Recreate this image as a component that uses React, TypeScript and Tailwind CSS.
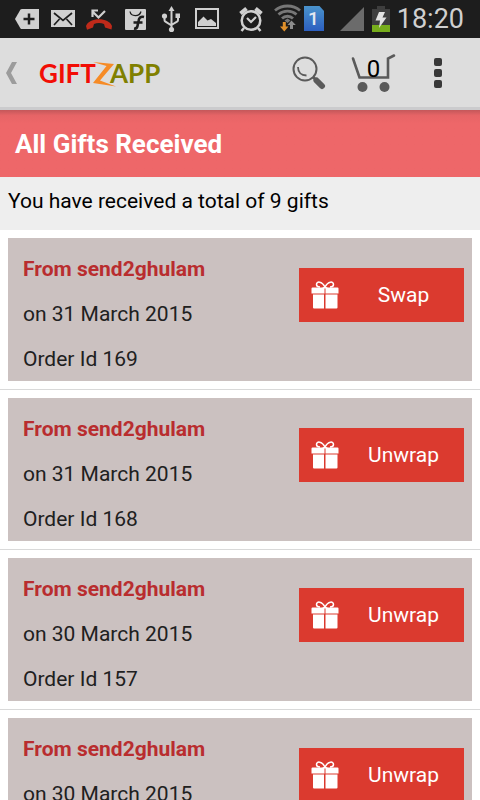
import type { ReactNode } from 'react'

interface Gift {
  id: number
  from: string
  date: string
  action: 'Swap' | 'Unwrap'
}

const totalGifts = 9

const gifts: Gift[] = [
  { id: 169, from: 'send2ghulam', date: '31 March 2015', action: 'Swap' },
  { id: 168, from: 'send2ghulam', date: '31 March 2015', action: 'Unwrap' },
  { id: 157, from: 'send2ghulam', date: '30 March 2015', action: 'Unwrap' },
  { id: 156, from: 'send2ghulam', date: '30 March 2015', action: 'Unwrap' },
]

function StatusIcon({ width = 36, children }: { width?: number; children: ReactNode }) {
  return (
    <svg width={width} height={38} viewBox={`0 0 ${width} 38`} fill="none" className="shrink-0" aria-hidden="true">
      {children}
    </svg>
  )
}

function StatusBar() {
  return (
    <div className="flex h-[38px] shrink-0 items-center justify-between bg-[#1d1d1d] pr-4 pl-[9px] text-[#d0d0d0]">
      <div className="flex">
        <StatusIcon>
          <path d="M6 19 11.500 9.500Q12 9 13 9H30V29H13Q12 29 11.500 28.500Z" fill="#d0d0d0" />
          <path d="M20 13.500V24.500M14.500 19H25.500" stroke="#1d1d1d" strokeWidth="2.500" />
        </StatusIcon>
        <StatusIcon>
          <path d="M6 10H30V27H6Z" fill="#d0d0d0" />
          <path d="M9 13 18 20.500 27 13M9 25 14.500 19M27 25 21.500 19" stroke="#1d1d1d" strokeWidth="1.700" />
        </StatusIcon>
        <StatusIcon>
          <path d="M24 11 17.500 17.500 11.500 11.500M11.500 17V10.500H17" stroke="#d0d0d0" strokeWidth="2.200" />
          <path d="M5 26C8 17 28 17 31 26L30.500 29.500 24 27.500 23 24C20 22.500 16 22.500 13 24L12 27.500 6 29.800Z" fill="#bf2a1a" />
        </StatusIcon>
        <StatusIcon>
          <rect x="8" y="9" width="21" height="21" rx="1" fill="#d0d0d0" />
          <path d="M13 11.500C14 17 22.500 17 24 11.500" stroke="#1d1d1d" strokeWidth="1.300" />
          <path d="M27 17C23.500 16 22 18 21.500 21L20.500 26Q20 29 17 28.500M16.500 22.500H25.500" stroke="#1d1d1d" strokeWidth="2.600" />
        </StatusIcon>
        <StatusIcon>
          <path d="M18.500 9V30M11.500 17V20Q11.500 21 12.500 21.700L18.500 25.500M25 17V20Q25 21 24 21.700L18.500 25" stroke="#d0d0d0" strokeWidth="2" />
          <path d="M18.500 6 21.500 11H15.500Z" fill="#d0d0d0" />
          <circle cx="11.500" cy="16" r="2.600" fill="#d0d0d0" />
          <path d="M22.500 13.500H27V18H22.500Z" fill="#d0d0d0" />
          <circle cx="18.500" cy="29.500" r="2.600" fill="#d0d0d0" />
        </StatusIcon>
        <StatusIcon>
          <rect x="7" y="9" width="22" height="19" stroke="#d0d0d0" strokeWidth="2" />
          <path d="M9 26V22L14.500 16.500 18.500 20.500 22 19 27 23V26Z" fill="#d0d0d0" />
        </StatusIcon>
      </div>

      <div className="flex items-center">
        <StatusIcon>
          <circle cx="18" cy="20.500" r="9.300" stroke="#d0d0d0" strokeWidth="2.500" />
          <path d="M14 18 18 22 23 17" stroke="#d0d0d0" strokeWidth="2.200" />
          <path d="M7.500 13.500 13.500 8.500M28.500 13.500 22.500 8.500" stroke="#d0d0d0" strokeWidth="4" />
          <path d="M11 28 8.500 31M25 28 27.500 31" stroke="#d0d0d0" strokeWidth="2.500" />
        </StatusIcon>
        <StatusIcon width={34}>
          <path d="M6 10.500C13 4.500 24 4.500 31 10.500M9.500 14.500C14.500 10 22.500 10 27.500 14.500M13 18.500C16 15.500 21 15.500 24 18.500" stroke="#777777" strokeWidth="2.800" />
          <path d="M15.500 20.500 18.500 18.500 21.500 20.500 18.500 23Z" fill="#777777" />
          <path d="M13.800 22H16.800V26.500H19.500L15.300 31.500 11 26.500H13.800Z" fill="#e0902a" />
          <path d="M21 29V25H18.500L22.500 20.500 26.800 25H24V29Z" fill="#8c8c8c" />
        </StatusIcon>
        <StatusIcon width={24}>
          <defs>
            <linearGradient id="sim" x1="0" y1="0" x2="0" y2="1">
              <stop offset="0" stopColor="#4a93cc" />
              <stop offset="1" stopColor="#2c5fc0" />
            </linearGradient>
          </defs>
          <path d="M1 6H16.500L21 11V31H1Z" fill="url(#sim)" />
          <text x="10.500" y="25" textAnchor="middle" fontSize="19" fontWeight="500" fontFamily="Roboto, sans-serif" fill="#e4e8f0">1</text>
        </StatusIcon>
        <StatusIcon width={40}>
          <path d="M13 31H37V7Z" fill="#6b6b6b" />
        </StatusIcon>
        <StatusIcon width={30}>
          <path d="M10 6H18V9H23V32H5V9H10Z" fill="#3e3e3e" />
          <path d="M5 25H23V32H5Z" fill="#77ad1c" />
          <path d="M12 12H18L15.500 17.500H19.500L12 28 13 20.500H8.500Z" fill="#e2e2e2" />
        </StatusIcon>
        <time className="text-[27px] leading-8">18:20</time>
      </div>
    </div>
  )
}

function Logo() {
  return (
    <svg width="124" height="36" viewBox="0 0 124 36" fontFamily="Lato, sans-serif" fontSize="26" fontWeight="700" aria-label="GiftZapp">
      <text x="1" y="28" fill="#f20d05">GIFT</text>
      <text x="72" y="28" fill="#808000">APP</text>
      <path d="M55 7 76 9 62 25.500 78 31.500 55 28 68.500 11Z" fill="#f68b26" />
    </svg>
  )
}

function ActionBar() {
  return (
    <header className="flex h-[72px] shrink-0 items-center border-b-3 border-[#cbcbcd] bg-[#dddddd] pl-[6px]">
      <button type="button" aria-label="Back" className="mr-5">
        <svg width="12" height="22" viewBox="0 0 12 22" aria-hidden="true">
          <path d="M6 0H11L5 11 11 22H6L0 11Z" fill="#9c9c9c" />
        </svg>
      </button>
      <Logo />
      <div className="ml-auto flex items-center">
        <button type="button" aria-label="Search" className="mr-[25px]">
          <svg width="34" height="34" viewBox="0 0 34 34" fill="none" stroke="#5a5a5a" aria-hidden="true">
            <circle cx="13" cy="13" r="11.500" strokeWidth="2" />
            <path d="M6 11C6 16 9 19.500 14.500 19.500" strokeWidth="1.800" />
            <path d="M21 21 24 24" strokeWidth="3" />
            <path d="M24.500 24.500 30 30" strokeWidth="6" strokeLinecap="round" />
          </svg>
        </button>
        <button type="button" aria-label="Cart" className="relative mr-[38px]">
          <svg width="45" height="40" viewBox="0 0 45 40" fill="none" aria-hidden="true">
            <path d="M2 5.500 8.500 24.500H37V5.500L43 2.500" stroke="#5a5a5a" strokeWidth="2.600" strokeLinecap="round" />
            <circle cx="11.500" cy="34" r="5" fill="#5a5a5a" />
            <circle cx="33.500" cy="34" r="5" fill="#5a5a5a" />
          </svg>
          <span className="absolute inset-x-0 top-0 text-center text-2xl leading-8 text-black">0</span>
        </button>
        <button type="button" aria-label="More options" className="mr-[38px]">
          <svg width="8" height="30" viewBox="0 0 8 30" fill="#383838" aria-hidden="true">
            <rect width="8" height="8" rx="2" />
            <rect y="11" width="8" height="8" rx="2" />
            <rect y="22" width="8" height="8" rx="2" />
          </svg>
        </button>
      </div>
    </header>
  )
}

function GiftIcon() {
  return (
    <svg width="28" height="28" viewBox="0 0 28 28" fill="none" className="shrink-0" aria-hidden="true">
      <path d="M14 6C11 0 5.500 0 5.500 3.500 5.500 5.500 8 6 9 6M14 6C17 0 22.500 0 22.500 3.500 22.500 5.500 20 6 19 6" stroke="white" strokeWidth="1.500" />
      <path d="M1.500 6.500H11L14 5.500 17 6.500H26.500Q27.500 6.500 27.500 7.500V12.500H14.500V7.500H13.500V12.500H0.500V7.500Q0.500 6.500 1.500 6.500Z" fill="white" />
      <path d="M2 13.500H13V27.500H3Q2 27.500 2 26.500ZM14.500 13.500H26.500V26.500Q26.500 27.500 25.500 27.500H14.500Z" fill="white" />
    </svg>
  )
}

function GiftRow({ gift }: { gift: Gift }) {
  return (
    <li className="border-b border-[#d9d9d9] p-2">
      <div className="flex h-[143px] items-start justify-between bg-[#cbc1c0] pt-[9px] pr-2 pl-[15px] text-[21px] leading-[45px] text-[#202020]">
        <div>
          <h2 className="font-bold text-[#b92d2f]">From {gift.from}</h2>
          <p>on {gift.date}</p>
          <p>Order Id {gift.id}</p>
        </div>
        <button type="button" className="mt-[21px] flex h-[54px] w-[165px] items-center bg-[#db3a2f] pl-3 text-white">
          <GiftIcon />
          <span className="flex-1 pl-1 text-center">{gift.action}</span>
        </button>
      </div>
    </li>
  )
}

export default function App() {
  return (
    <div className="flex h-screen flex-col overflow-hidden bg-white font-['Roboto',sans-serif]">
      <StatusBar />
      <ActionBar />
      <h1 className="h-[67px] shrink-0 bg-[#ee6769] bg-linear-to-b from-[#c4575a] via-[#e66466] via-8% to-[#ee6769] to-20% px-[15px] text-[26px] leading-[69px] font-bold text-white">
        All Gifts Received
      </h1>
      <p className="h-[53px] shrink-0 bg-[#eeeeee] px-2 text-[21px] leading-[48px] text-black">
        You have received a total of {totalGifts} gifts
      </p>
      <ul className="min-h-0 flex-1 overflow-hidden">
        {gifts.map(gift => <GiftRow key={gift.id} gift={gift} />)}
      </ul>
    </div>
  )
}
